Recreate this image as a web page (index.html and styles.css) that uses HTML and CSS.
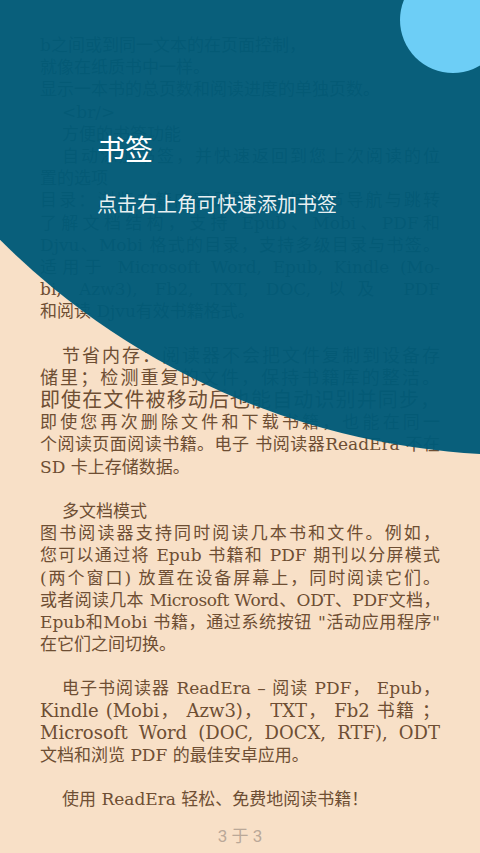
FILE: index.html
```html
<!DOCTYPE html>
<html lang="zh-CN">
<head>
<meta charset="utf-8">
<title>ReadEra</title>
<link rel="stylesheet" href="styles.css">
</head>
<body>
<div class="page">
  <div class="text">
    <div class="ln">b之间或到同一文本的在页面控制，</div>
    <div class="ln">就像在纸质书中一样。</div>
    <div class="ln">显示一本书的总页数和阅读进度的单独页数。</div>
    <div class="ln in">&lt;br/&gt;</div>
    <div class="ln in">方便的书签功能</div>
    <div class="ln in j">自动添加书签，并快速返回到您上次阅读的位</div>
    <div class="ln">置的选项</div>
    <div class="ln j">目录：浏览书籍内容目录，支持章节导航与跳转</div>
    <div class="ln j">了解文档结构，支持 Epub、Mobi、PDF和</div>
    <div class="ln j">Djvu、Mobi 格式的目录，支持多级目录与书签。</div>
    <div class="ln j">适用于 Microsoft Word, Epub, Kindle (Mo-</div>
    <div class="ln j">bi, Azw3), Fb2, TXT, DOC, 以及 PDF</div>
    <div class="ln">和阅读 Djvu有效书籍格式。</div>
    <div class="ln"></div>
    <div class="ln in j big1">节省内存：阅读器不会把文件复制到设备存</div>
    <div class="ln j big1">储里；检测重复的文件，保持书籍库的整洁。</div>
    <div class="ln j big2">即使在文件被移动后也能自动识别并同步，</div>
    <div class="ln j">即使您再次删除文件和下载书籍，也能在同一</div>
    <div class="ln j">个阅读页面阅读书籍。电子 书阅读器ReadEra 不在</div>
    <div class="ln">SD 卡上存储数据。</div>
    <div class="ln"></div>
    <div class="ln in">多文档模式</div>
    <div class="ln j">图书阅读器支持同时阅读几本书和文件。例如，</div>
    <div class="ln j">您可以通过将 Epub 书籍和 PDF 期刊以分屏模式</div>
    <div class="ln j">(两个窗口) 放置在设备屏幕上，同时阅读它们。</div>
    <div class="ln j tight">或者阅读几本 Microsoft Word、ODT、PDF文档，</div>
    <div class="ln j">Epub和Mobi 书籍，通过系统按钮 "活动应用程序"</div>
    <div class="ln">在它们之间切换。</div>
    <div class="ln"></div>
    <div class="ln in j">电子书阅读器 ReadEra – 阅读 PDF， Epub，</div>
    <div class="ln j big1">Kindle (Mobi， Azw3)， TXT， Fb2 书籍 ；</div>
    <div class="ln j big1">Microsoft Word (DOC, DOCX, RTF), ODT</div>
    <div class="ln">文档和浏览 PDF 的最佳安卓应用。</div>
    <div class="ln"></div>
    <div class="ln in">使用 ReadEra 轻松、免费地阅读书籍！</div>
  </div>
  <div class="pagenum">3 于 3</div>
</div>

<div class="tour">
  <div class="outer"></div>
  <div class="target"></div>
  <div class="tip">
    <div class="tip-title">书签</div>
    <div class="tip-desc">点击右上角可快速添加书签</div>
  </div>
</div>
</body>
</html>
```

FILE: styles.css
```css
html, body {
  margin: 0;
  padding: 0;
}
body {
  width: 480px;
  height: 853px;
  overflow: hidden;
  background: #f8e0c7;
  position: relative;
}
.page {
  height: 853px;
  display: flex;
  flex-direction: column;
  box-sizing: border-box;
  padding: 34px 40px 6px;
}
.text {
  font-family: "DejaVu Serif", "Noto Sans CJK SC", serif;
  font-size: 17px;
  color: #6e4e33;
}
.ln {
  height: 22.2px;
  line-height: 22.2px;
}
.ln.in {
  padding-left: 22px;
}
.ln.j {
  text-align: justify;
  text-align-last: justify;
}
.tight {
  letter-spacing: -0.4px;
}
.big1 {
  font-size: 18px;
}
.big2 {
  font-size: 20px;
}
.pagenum {
  margin-top: auto;
  text-align: center;
  font-family: Roboto, "Noto Sans CJK SC", sans-serif;
  font-size: 17px;
  line-height: 22px;
  color: #baa898;
}
.tour {
  position: absolute;
  left: 0;
  top: 0;
  width: 480px;
  height: 853px;
  overflow: hidden;
}
.outer {
  position: absolute;
  left: -216px;
  top: -1017px;
  width: 1472px;
  height: 1472px;
  border-radius: 50%;
  background: #005a78;
  opacity: 0.965;
}
.target {
  position: absolute;
  left: 400px;
  top: -33px;
  width: 106px;
  height: 106px;
  border-radius: 50%;
  background: #6dcef6;
}
.tip {
  position: absolute;
  left: 97px;
  top: 130px;
  font-family: "Noto Sans CJK SC", sans-serif;
  color: #ffffff;
}
.tip-title {
  font-size: 28px;
  line-height: 36px;
}
.tip-desc {
  margin-top: 24px;
  font-size: 20px;
  line-height: 28px;
  color: rgba(255, 255, 255, 0.92);
}
```
